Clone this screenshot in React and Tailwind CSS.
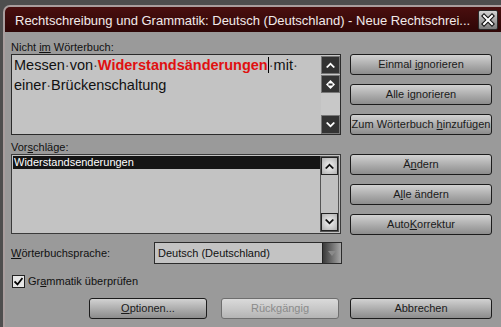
import React from "react";

function Btn({ children, disabled, className = "" }) {
  return (
    <div
      className={
        "h-[21px] rounded-[3px] border flex items-center justify-center text-[11px] leading-none " +
        (disabled
          ? "border-[#6e6e6e] bg-gradient-to-b from-[#dadada] via-[#c8c8c8] to-[#b4b4b4] text-[#8a8a8a] "
          : "border-[#1c1c1c] bg-gradient-to-b from-[#d2d2d2] via-[#aeaeae] to-[#8c8c8c] text-[#1a1a1a] ") +
        className
      }
    >
      <span className="whitespace-pre">{children}</span>
    </div>
  );
}

function Arrow({ down, color = "#fff" }) {
  return (
    <svg width="9" height="6" viewBox="0 0 9 6">
      <path
        d={down ? "M0 1 L4.5 5.5 L9 1 L7.5 0 L4.5 3 L1.5 0 Z" : "M0 5 L4.5 0.5 L9 5 L7.5 6 L4.5 3 L1.5 6 Z"}
        fill={color}
      />
    </svg>
  );
}

export default function App() {
  return (
    <div
      className="w-[501px] h-[327px] overflow-hidden bg-[#4e4e4e] pt-[5px] pl-[3px]"
      style={{ fontFamily: '"Liberation Sans", Arial, sans-serif' }}
    >
      <div className="h-[322px] rounded-tl-[7px] border-l-2 border-t-2 border-[#a99e9e] bg-[#9a9a9a] overflow-hidden">
        {/* title bar */}
        <div className="h-[25px] bg-gradient-to-b from-[#4a0f0f] to-[#2e0606] flex items-center pl-[10px] pr-[3px]">
          <div className="flex-1 text-[13px] text-[#f2eaea] leading-none pt-[1px] whitespace-nowrap">
            Rechtschreibung und Grammatik: Deutsch (Deutschland) - Neue Rechtschrei...
          </div>
          <div className="w-[20px] h-[20px] rounded-[2px] border border-[#2a2a2a] bg-gradient-to-b from-[#d4d4d4] to-[#7c7c7c] flex items-center justify-center">
            <svg width="14" height="14" viewBox="0 0 14 14">
              <path d="M3 3 L11 11 M11 3 L3 11" stroke="#111" strokeWidth="4.2" strokeLinecap="square" />
              <path d="M3 3 L11 11 M11 3 L3 11" stroke="#fff" strokeWidth="2" strokeLinecap="square" />
            </svg>
          </div>
        </div>

        {/* body */}
        <div className="pl-[6px] text-[11px] text-[#111]">
          {/* row 1 */}
          <div className="flex gap-[9px]">
            <div className="w-[330px]">
              <div className="pt-[8px] h-[22px] leading-[14px]">
                Nicht <span className="underline">im</span> Wörterbuch:
              </div>
              <div className="h-[81px] border border-[#2b2b2b] bg-[#c3c3c3] flex">
                <div className="flex-1 pl-[2px] text-[14.5px] leading-[20px] text-[#111]">
                  <div className="whitespace-nowrap">
                    Messen<span className="text-[#444]">·</span>von<span className="text-[#444]">·</span>
                    <span className="font-bold text-[#e01010]">Widerstandsänderungen</span>
                    <span className="inline-block w-px h-[16px] bg-black align-[-3px]" />
                    <span className="text-[#444]">·</span>mit<span className="text-[#444]">·</span>
                  </div>
                  <div className="whitespace-nowrap">
                    einer<span className="text-[#444]">·</span>Brückenschaltung
                  </div>
                </div>
                <div className="w-[19px] flex flex-col bg-[#c8c8c8] pt-[1px]">
                  <div className="h-[18px] bg-[#333] border border-[#777] flex items-center justify-center">
                    <Arrow />
                  </div>
                  <div className="h-[18px] mt-[1px] bg-[#333] border border-[#777] flex items-center justify-center">
                    <svg width="9" height="9" viewBox="0 0 9 9">
                      <path d="M4.5 0 L9 4.5 L4.5 9 L0 4.5 Z" fill="#fff" />
                      <rect x="2.5" y="3.5" width="4" height="2" fill="#333" />
                    </svg>
                  </div>
                  <div className="flex-1" />
                  <div className="h-[19px] bg-[#333] border border-[#777] flex items-center justify-center">
                    <Arrow down />
                  </div>
                </div>
              </div>
            </div>
            <div className="w-[142px] pt-[22px] flex flex-col gap-[9px]">
              <Btn>
                Einmal <span className="underline">i</span>gnorieren
              </Btn>
              <Btn>
                Alle i<span className="underline">g</span>norieren
              </Btn>
              <Btn>
                Zum Wörterbuch <span className="underline">h</span>inzufügen
              </Btn>
            </div>
          </div>

          {/* row 2 */}
          <div className="flex gap-[9px]">
            <div className="w-[330px]">
              <div className="pt-[5px] h-[19px] leading-[14px]">
                Vor<span className="underline">s</span>chläge:
              </div>
              <div className="h-[80px] border border-[#3a3a3a] bg-[#c3c3c3] flex p-[1px]">
                <div className="flex-1">
                  <div className="h-[13px] bg-[#151515] text-white leading-[13px] pl-[1px]">Widerstandsenderungen</div>
                </div>
                <div className="w-[19px] flex flex-col border border-[#555] bg-[#c0c0c0]">
                  <div className="h-[18px] border border-[#222] bg-[radial-gradient(circle,#f4f4f4,#b0b0b0)] flex items-center justify-center">
                    <Arrow color="#111" />
                  </div>
                  <div className="flex-1" />
                  <div className="h-[18px] border border-[#222] bg-[radial-gradient(circle,#f4f4f4,#b0b0b0)] flex items-center justify-center">
                    <Arrow down color="#111" />
                  </div>
                </div>
              </div>
            </div>
            <div className="w-[142px] pt-[19px] flex flex-col gap-[9px]">
              <Btn>
                Ä<span className="underline">n</span>dern
              </Btn>
              <Btn>
                A<span className="underline">l</span>le ändern
              </Btn>
              <Btn>
                Auto<span className="underline">K</span>orrektur
              </Btn>
            </div>
          </div>

          {/* row 3 */}
          <div className="flex items-center mt-[7px] h-[22px]">
            <div className="w-[143px]">
              <span className="underline">W</span>örterbuchsprache:
            </div>
            <div className="w-[188px] h-[22px] border border-[#2b2b2b] bg-[#c3c3c3] flex">
              <div className="flex-1 pl-[3px] leading-[20px]">Deutsch (Deutschland)</div>
              <div className="w-[19px] bg-gradient-to-r from-[#3a3a3a] to-[#a8a8a8] border-l border-[#222] flex items-center justify-center">
                <svg width="8" height="5" viewBox="0 0 8 5">
                  <path d="M0 0 L8 0 L4 5 Z" fill="#8a8a8a" />
                </svg>
              </div>
            </div>
          </div>

          {/* row 4 */}
          <div className="flex items-center mt-[11px] h-[13px] pl-[1px]">
            <div className="w-[13px] h-[13px] border border-[#222] bg-[#e6e6e6] flex items-center justify-center">
              <svg width="9" height="9" viewBox="0 0 9 9">
                <path d="M0.5 4.5 L3.5 7.5 L8.5 1" stroke="#000" strokeWidth="1.8" fill="none" />
              </svg>
            </div>
            <div className="ml-[3px]">
              Gr<span className="underline">a</span>mmatik überprüfen
            </div>
          </div>

          {/* row 5 */}
          <div className="flex mt-[10px] pl-[78px]">
            <Btn className="w-[118px]">
              <span className="underline">O</span>ptionen...
            </Btn>
            <Btn disabled className="w-[118px] ml-[14px]">
              Rückgängig
            </Btn>
            <Btn className="w-[142px] ml-[11px]">Abbrechen</Btn>
          </div>
        </div>
      </div>
    </div>
  );
}
